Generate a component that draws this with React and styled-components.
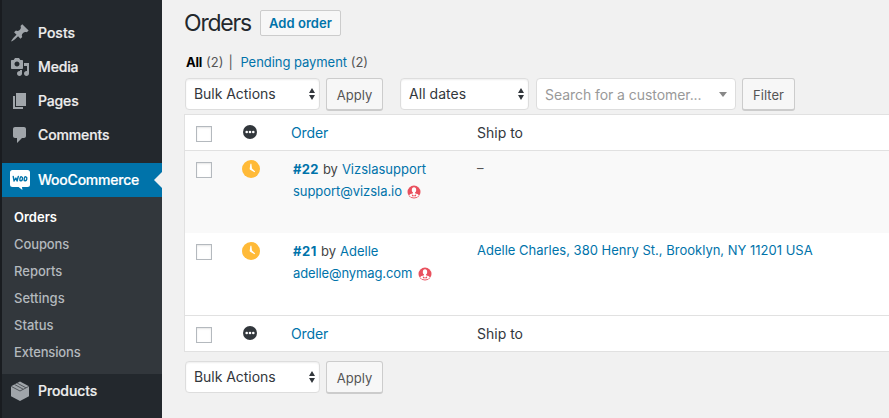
import React from "react";
import styled, { createGlobalStyle, css } from "styled-components";

const GlobalStyle = createGlobalStyle`
  * { box-sizing: border-box; }
  body { margin: 0; background: #f1f1f1; font-family: Inter, Roboto, sans-serif; font-size: 13px; color: #444; }
  ul, h1 { margin: 0; padding: 0; list-style: none; }
`;

const Page = styled.div`
  display: flex;
  width: 889px;
  height: 418px;
  overflow: hidden;
`;

const Sidebar = styled.nav`
  flex: none;
  width: 162px;
  padding-top: 16px;
  background: #23282d;
  border-left: 2px solid #191c20;
`;

const MenuItem = styled.a`
  display: flex;
  align-items: center;
  gap: 8px;
  position: relative;
  height: 34px;
  padding-left: 8px;
  margin-top: ${(p) => (p.$active ? 11 : 0)}px;
  color: ${(p) => (p.$active ? "#fff" : "#eee")};
  background: ${(p) => (p.$active ? "#0073aa" : "transparent")};
  font-size: 14px;
  font-weight: 500;
  letter-spacing: ${(p) => p.$spacing || 0}px;
  svg { flex: none; fill: #a0a5aa; }
  ${(p) => p.$active && css`
    &::after {
      content: "";
      position: absolute;
      right: 0;
      top: 9px;
      border: 8px solid transparent;
      border-left-width: 0;
      border-right-color: #f1f1f1;
    }
  `}
`;

const MenuLabel = styled.span`
  padding-bottom: 2px;
  -webkit-text-stroke: 0.2px currentColor;
`;

const SubMenu = styled.ul`
  height: 177px;
  padding: 7px 0 0 12px;
  background: #32373c;
`;

const SubItem = styled.li`
  height: 27px;
  line-height: 27px;
  color: ${(p) => (p.$current ? "#fff" : "#b4b9be")};
  font-weight: ${(p) => (p.$current ? 600 : 500)};
  letter-spacing: ${(p) => p.$spacing || 0}px;
`;

const Content = styled.main`
  flex: 1;
  min-width: 0;
  padding: 10px 0 0 22px;
`;

const Heading = styled.div`
  display: flex;
  gap: 9px;
  height: 26px;
`;

const Title = styled.h1`
  width: 67px;
  color: #23282d;
  font-size: 23px;
  font-weight: 400;
  line-height: 27px;
  letter-spacing: -1.2px;
  white-space: nowrap;
`;

const AddButton = styled.a`
  width: 81px;
  height: 26px;
  border: 1px solid #ccc;
  border-radius: 2px;
  background: #f7f7f7;
  color: #0073aa;
  font-weight: 600;
  line-height: 25px;
  text-align: center;
  letter-spacing: 0.05px;
`;

const Filters = styled.div`
  display: flex;
  align-items: center;
  height: 18px;
  margin: 17px 0 1px;
  padding-left: 2px;
  white-space: pre;
  color: #555;
`;

const Current = styled.b`
  width: 20px;
  color: #000;
  letter-spacing: -0.2px;
`;

const Divider = styled.span`
  width: 17px;
  padding-left: 5px;
`;

const Link = styled.a`
  color: #0073aa;
  font-weight: ${(p) => (p.$bold ? 700 : 400)};
  letter-spacing: ${(p) => p.$spacing || 0}px;
`;

const Toolbar = styled.div`
  display: flex;
  height: ${(p) => (p.$bottom ? 43 : 42)}px;
  padding: ${(p) => (p.$bottom ? "9px" : "6px")} 0 0 1px;
`;

const Select = styled.div`
  display: flex;
  justify-content: space-between;
  align-items: center;
  width: ${(p) => p.$width}px;
  height: 32px;
  margin-right: ${(p) => p.$gap}px;
  padding: 0 ${(p) => (p.$search ? 8 : 4)}px ${(p) => (p.$search ? 0 : 1)}px 8px;
  border: 1px solid #ddd;
  border-radius: 4px;
  background: #fff;
  box-shadow: ${(p) => (p.$search ? "none" : "inset 0 1px 2px rgba(0, 0, 0, 0.07)")};
  color: ${(p) => (p.$search ? "#999" : "#32373c")};
  font-size: 14px;
  letter-spacing: ${(p) => p.$spacing}px;
  white-space: nowrap;
  svg { flex: none; }
`;

const Button = styled.button`
  width: ${(p) => p.$width}px;
  height: 33px;
  margin: 0 ${(p) => p.$gap || 0}px 0 0;
  padding: 2px 0 0;
  border: 1px solid #ccc;
  border-bottom-width: 2px;
  border-radius: 3px;
  background: #f7f7f7;
  color: #555;
  font: 13px Inter, sans-serif;
`;

const Table = styled.div`
  width: 720px;
  border: 1px solid #e1e1e1;
  background: #fff;
`;

const Row = styled.div`
  display: grid;
  grid-template-columns: 49px 58px 185px 1fr;
  height: 82px;
  background: ${(p) => (p.$alt ? "#f9f9f9" : "#fff")};
`;

const HeadRow = styled(Row)`
  height: 36px;
  ${(p) => (p.$foot ? "border-top" : "border-bottom")}: 1px solid #e1e1e1;
`;

const CheckCell = styled.div`
  padding: 11px 0 0 11px;
`;

const Checkbox = styled.div`
  width: 16px;
  height: 16px;
  border: 1px solid #b4b9be;
  background: #fff;
  box-shadow: inset 0 1px 2px rgba(0, 0, 0, 0.1);
`;

const IconCell = styled.div`
  padding: ${(p) => p.$top}px 0 0 ${(p) => p.$left}px;
  svg { display: block; }
`;

const HeadCell = styled.div`
  margin-left: ${(p) => (p.$link ? -1 : 0)}px;
  font-size: 14px;
  line-height: 35px;
  color: ${(p) => (p.$link ? "#0073aa" : "#32373c")};
  letter-spacing: ${(p) => (p.$link ? -0.1 : 0)}px;
`;

const OrderCell = styled.div`
  padding: 7px 0 0 1px;
  line-height: 22px;
  white-space: nowrap;
`;

const Line = styled.div`
  display: flex;
  align-items: center;
  gap: ${(p) => p.$gap}px;
  svg { margin-top: 2px; margin-left: -0.500px; }
`;

const ShipCell = styled.div`
  padding-top: 6px;
  line-height: 22px;
  color: #555;
  white-space: nowrap;
`;

const icons = {
  post: "M10.44 3.02l1.82-1.82 6.36 6.35-1.83 1.82c-1.05-.68-2.48-.57-3.41.36l-.75.75c-.92.93-1.04 2.35-.35 3.41l-1.83 1.82-2.41-2.41-2.8 2.79c-.42.42-3.38 2.71-3.8 2.29s1.86-3.39 2.28-3.81l2.79-2.79L4.1 9.36l1.83-1.82c1.05.69 2.48.57 3.4-.36l.75-.75c.93-.92 1.05-2.35.36-3.41z",
  media: "M13 11V4c0-.55-.45-1-1-1h-1.67L9 1H5L3.67 3H2c-.55 0-1 .45-1 1v7c0 .55.45 1 1 1h10c.55 0 1-.45 1-1zM7 4.5c1.38 0 2.5 1.12 2.5 2.5S8.38 9.5 7 9.5 4.5 8.38 4.5 7 5.62 4.5 7 4.5zM14 6h5v10.5c0 1.38-1.12 2.5-2.5 2.5S14 17.88 14 16.5s1.12-2.5 2.5-2.5c.17 0 .34.02.5.05V9h-3V6zm-4 8.05V13h2v3.5c0 1.38-1.12 2.5-2.5 2.5S7 17.88 7 16.5 8.12 14 9.5 14c.17 0 .34.02.5.05z",
  page: "M6 15V2h10v13H6zm-1 1h8v2H3V5h2v11z",
  comment: "M5 2h9c1.1 0 2 .9 2 2v7c0 1.1-.9 2-2 2h-2l-5 5v-5H5c-1.1 0-2-.9-2-2V4c0-1.1.9-2 2-2z",
};

const MenuIcon = ({ name }) => (
  <svg width="20" height="20" viewBox="0 0 20 20"><path d={icons[name]} /></svg>
);

const WooIcon = () => (
  <svg width="20" height="20" viewBox="0 0 20 20">
    <path fill="#fff" d="M2.5 0h15A2.5 2.5 0 0 1 20 2.5v12a2.5 2.5 0 0 1-2.5 2.5H12l.4 3-3.8-3H2.5A2.5 2.5 0 0 1 0 14.5v-12A2.5 2.5 0 0 1 2.500 0z" />
    <g fill="none" stroke="#0073aa" strokeWidth="1.4" strokeLinecap="round" strokeLinejoin="round">
      <path d="M3.200 6.400l.9 4.600 1.800-3 1.200 3 1.200-4.600" />
      <ellipse cx="11.200" cy="8.800" rx="1.300" ry="2" transform="rotate(12 11.200 8.800)" />
      <ellipse cx="15.500" cy="8.800" rx="1.300" ry="2" transform="rotate(12 15.500 8.800)" />
    </g>
  </svg>
);

const BoxIcon = () => (
  <svg width="20" height="20" viewBox="0 0 20 20">
    <path d="M10 .5l9 4.800v10L10 20l-9-4.700v-10z" />
    <g fill="none" stroke="#3a3f44" strokeWidth=".8">
      <path d="M1.200 5.400L10 10l8.800-4.600" />
      <path d="M4.600 3.500l8.600 4.700M7.200 2.100l8.600 4.600" />
    </g>
  </svg>
);

const Arrows = () => (
  <svg width="6" height="12" viewBox="0 0 6 12" fill="#32373c"><path d="M3 0l3 5H0zM3 12l3-5H0z" /></svg>
);

const Caret = () => (
  <svg width="8" height="5" viewBox="0 0 8 5" fill="#888"><path d="M0 0h8L4 5z" /></svg>
);

const Dots = () => (
  <svg width="14" height="14" viewBox="0 0 14 14">
    <circle cx="7" cy="7" r="7" fill="#32373c" />
    <g fill="#fff"><circle cx="3.700" cy="7" r="1.300" /><circle cx="7" cy="7" r="1.300" /><circle cx="10.300" cy="7" r="1.300" /></g>
  </svg>
);

const Clock = () => (
  <svg width="18" height="18" viewBox="0 0 18 18">
    <circle cx="9" cy="9" r="9" fill="#ffba38" />
    <path fill="#fff" d="M8.400 3.800h1l.6 4.600 3.200 3-.7.8-4.300-2.500c-.5-.3-.6-.6-.5-1.100z" />
  </svg>
);

const Avatar = () => (
  <svg width="14" height="14" viewBox="0 0 14 14">
    <circle cx="7" cy="7" r="6.500" fill="#e9515e" />
    <ellipse cx="7" cy="4.900" rx="2.200" ry="2.700" fill="#fff" />
    <path fill="#fff" d="M6 6.500h2v1.700c1.800.5 3.500 1 3.900 2.300-.9 1.200-2.600 2-4.900 2s-4-.8-4.900-2c.4-1.300 2.100-1.800 3.900-2.300z" />
    <path fill="#e9515e" d="M4.900 9.200L7 10.700l2.100-1.500v2H4.900z" />
  </svg>
);

const HeaderCells = ({ foot }) => (
  <HeadRow $foot={foot}>
    <CheckCell><Checkbox /></CheckCell>
    <IconCell $top={10} $left={9}><Dots /></IconCell>
    <HeadCell $link>Order</HeadCell>
    <HeadCell>Ship to</HeadCell>
  </HeadRow>
);

const Order = ({ alt, id, name, email, ship, idSpacing, emailSpacing }) => (
  <Row $alt={alt}>
    <CheckCell><Checkbox /></CheckCell>
    <IconCell $top={9} $left={7.500}><Clock /></IconCell>
    <OrderCell>
      <Line $gap={4}>
        <Link $bold $spacing={idSpacing}>{id}</Link>
        <span>by</span>
        <Link>{name}</Link>
      </Line>
      <Line $gap={6}><Link $spacing={emailSpacing}>{email}</Link><Avatar /></Line>
    </OrderCell>
    <ShipCell>{ship}</ShipCell>
  </Row>
);

export default function App() {
  return (
    <>
      <GlobalStyle />
      <Page>
        <Sidebar>
          <MenuItem><MenuIcon name="post" /><MenuLabel>Posts</MenuLabel></MenuItem>
          <MenuItem $spacing={-0.15}><MenuIcon name="media" /><MenuLabel>Media</MenuLabel></MenuItem>
          <MenuItem $spacing={-0.15}><MenuIcon name="page" /><MenuLabel>Pages</MenuLabel></MenuItem>
          <MenuItem $spacing={-0.12}><MenuIcon name="comment" /><MenuLabel>Comments</MenuLabel></MenuItem>
          <MenuItem $active $spacing={-0.22}><WooIcon /><MenuLabel>WooCommerce</MenuLabel></MenuItem>
          <SubMenu>
            <SubItem $current>Orders</SubItem>
            <SubItem $spacing={-0.1}>Coupons</SubItem>
            <SubItem>Reports</SubItem>
            <SubItem>Settings</SubItem>
            <SubItem>Status</SubItem>
            <SubItem $spacing={-0.15}>Extensions</SubItem>
          </SubMenu>
          <MenuItem $spacing={-0.08}><BoxIcon /><MenuLabel>Products</MenuLabel></MenuItem>
        </Sidebar>
        <Content>
          <Heading>
            <Title>Orders</Title>
            <AddButton>Add order</AddButton>
          </Heading>
          <Filters>
            <Current>All</Current><span>(2)</span><Divider>|</Divider>
            <Link $spacing={-0.05}>Pending payment</Link><span> (2)</span>
          </Filters>
          <Toolbar>
            <Select $width={135} $gap={6} $spacing={-0.04}>Bulk Actions<Arrows /></Select>
            <Button $width={57} $gap={17}>Apply</Button>
            <Select $width={129} $gap={7} $spacing={0.05}>All dates<Arrows /></Select>
            <Select $search $width={200} $gap={6} $spacing={-0.06}>Search for a customer...<Caret /></Select>
            <Button $width={53}>Filter</Button>
          </Toolbar>
          <Table>
            <HeaderCells />
            <Order alt id="#22" name="Vizslasupport" email="support@vizsla.io" ship="–" idSpacing={0.35} emailSpacing={-0.05} />
            <Order
              id="#21" name="Adelle" email="adelle@nymag.com" idSpacing={0.6} emailSpacing={-0.12}
              ship={<Link>Adelle Charles, 380 Henry St., Brooklyn, NY 11201 USA</Link>}
            />
            <HeaderCells foot />
          </Table>
          <Toolbar $bottom>
            <Select $width={135} $gap={6} $spacing={-0.04}>Bulk Actions<Arrows /></Select>
            <Button $width={57}>Apply</Button>
          </Toolbar>
        </Content>
      </Page>
    </>
  );
}
